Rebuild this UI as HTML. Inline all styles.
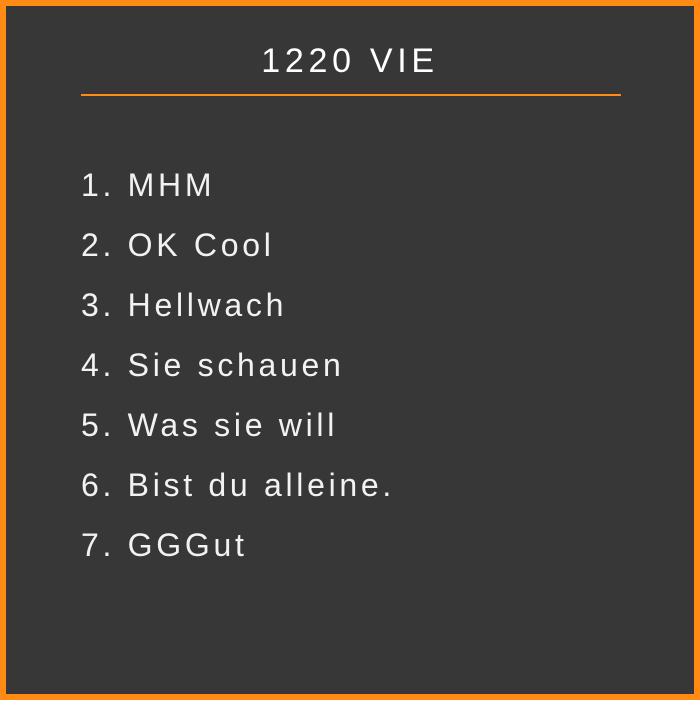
<!DOCTYPE html>
<html><head><meta charset="utf-8"><style>
html,body{margin:0;padding:0;background:#fff;}
.box{position:absolute;left:0;top:0;width:688px;height:688px;border:6px solid #ff8a14;background:#373737;}
.t{position:absolute;left:0;width:688px;top:38px;text-align:center;color:#fff;font:34px/1 "Liberation Sans",sans-serif;letter-spacing:4.7px;}
.line{position:absolute;left:75px;top:88px;width:540px;height:2px;background:#ff8a14;}
.li{position:absolute;left:75px;color:#f2f2f2;font:32px/1 "Liberation Sans",sans-serif;letter-spacing:3.7px;}
</style></head><body>
<div class="box">
<div class="t">1220 VIE</div>
<div class="line"></div>
<div class="li" style="top:163px">1. MHM</div>
<div class="li" style="top:223px">2. OK Cool</div>
<div class="li" style="top:283px">3. Hellwach</div>
<div class="li" style="top:343px">4. Sie schauen</div>
<div class="li" style="top:403px">5. Was sie will</div>
<div class="li" style="top:463px">6. Bist du alleine.</div>
<div class="li" style="top:523px">7. GGGut</div>
</div>
</body></html>
